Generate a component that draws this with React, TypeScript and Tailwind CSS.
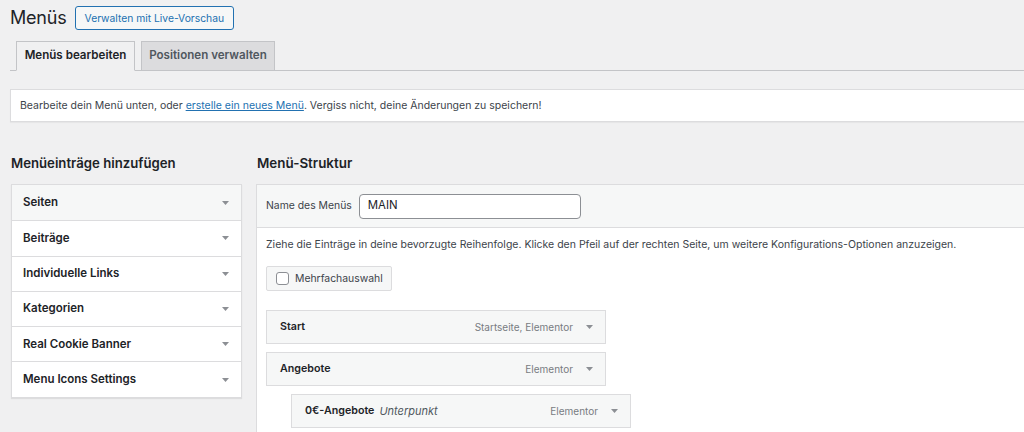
import React from "react";

const Arrow = ({ className = "" }: { className?: string }) => (
  <svg width="7" height="4" viewBox="0 0 7 4" className={`shrink-0 ${className}`}>
    <path d="M0 0 L7 0 L3.5 4 Z" fill="#8c8f94" />
  </svg>
);

const leftRows = [
  "Seiten",
  "Beiträge",
  "Individuelle Links",
  "Kategorien",
  "Real Cookie Banner",
  "Menu Icons Settings",
];

function MenuItem({
  title,
  sub,
  type,
  indent,
}: {
  title: string;
  sub?: string;
  type: string;
  indent?: boolean;
}) {
  return (
    <div className={indent ? "pl-[25px]" : ""}>
      <div className="flex h-[34px] w-[340px] items-center border border-[#dcdcde] bg-[#f6f7f7] pl-[13px] pr-[12px]">
        <span className="text-[10.7px] font-semibold text-[#1d2327]">{title}</span>
        {sub && <span className="ml-[5px] text-[11px] italic text-[#50575e]">{sub}</span>}
        <span className="ml-auto text-[10px] text-[#787c82]">{type}</span>
        <Arrow className="ml-[13px]" />
      </div>
    </div>
  );
}

export default function App() {
  return (
    <div
      className="h-[432px] w-[1024px] overflow-hidden bg-[#f0f0f1] text-[#3c434a]"
      style={{ fontFamily: "Inter, 'Noto Sans', sans-serif" }}
    >
      <div className="w-[1100px] pl-[10px]">
        {/* Header */}
        <div className="flex items-center pt-[6px]">
          <h1 className="text-[18px] font-normal leading-[24px] tracking-[-0.2px] text-[#1d2327]">Menüs</h1>
          <button className="ml-[8px] h-[24px] whitespace-nowrap rounded-[3px] border border-[#2271b1] bg-[#f6f7f7] px-[9px] text-[10.3px] leading-[22px] text-[#2271b1]">
            Verwalten mit Live-Vorschau
          </button>
        </div>

        {/* Tabs */}
        <div className="mt-[11px] flex gap-[6px] border-b border-[#c3c4c7] pl-[6px]">
          <div className="-mb-px flex h-[30px] w-[119px] items-center justify-center whitespace-nowrap border border-b-[#f0f0f1] border-[#c3c4c7] bg-[#f0f0f1] text-[11.6px] font-semibold text-[#1d2327]">
            Menüs bearbeiten
          </div>
          <div className="-mb-px flex h-[30px] w-[134px] items-center justify-center whitespace-nowrap border border-[#c3c4c7] bg-[#dcdcde] text-[11.6px] font-semibold text-[#50575e]">
            Positionen verwalten
          </div>
        </div>

        {/* Notice */}
        <div className="mt-[18px] flex h-[33px] items-center whitespace-nowrap border border-[#dcdcde] bg-white pl-[9px] text-[10.5px] text-[#3c434a] shadow-[0_1px_1px_rgba(0,0,0,0.04)]">
          Bearbeite dein Menü unten, oder&nbsp;
          <a className="text-[#2271b1] underline">erstelle ein neues Menü</a>. Vergiss nicht, deine Änderungen zu speichern!
        </div>

        {/* Columns */}
        <div className="mt-[30px] flex">
          {/* Left */}
          <div className="w-[232px] shrink-0">
            <h2 className="ml-[1px] text-[13.2px] font-semibold leading-[22px] text-[#1d2327]">Menüeinträge hinzufügen</h2>
            <div className="ml-[1px] mt-[10px] w-[231px] border border-[#dcdcde] bg-white shadow-[0_1px_1px_rgba(0,0,0,0.08)]">
              {leftRows.map((r, i) => (
                <div
                  key={r}
                  className={`flex h-[35.3px] items-center justify-between pl-[11px] pr-[12px] text-[11.5px] font-semibold text-[#1d2327] ${
                    i > 0 ? "border-t border-[#dcdcde]" : ""
                  } ${i === 0 ? "bg-[#f6f7f7]" : "bg-white"}`}
                >
                  <span>{r}</span>
                  <Arrow />
                </div>
              ))}
            </div>
          </div>

          {/* Right */}
          <div className="ml-[14px] flex-1">
            <h2 className="ml-[1px] text-[13.4px] font-semibold leading-[22px] text-[#1d2327]">Menü-Struktur</h2>
            <div className="mt-[10px] h-[260px] border border-[#dcdcde] bg-white">
              <div className="flex h-[43px] items-center border-b border-[#dcdcde] bg-[#f6f7f7] pl-[9px]">
                <span className="whitespace-nowrap text-[10.4px] text-[#3c434a]">Name des Menüs</span>
                <div className="ml-[7px] flex h-[25px] w-[222px] items-center rounded-[4px] border border-[#8c8f94] bg-white pl-[8px] text-[11.4px] text-[#1d2327]">
                  MAIN
                </div>
              </div>
              <div className="pl-[9px]">
                <p className="mt-[9px] whitespace-nowrap text-[10.5px] leading-[16px] text-[#3c434a]">
                  Ziehe die Einträge in deine bevorzugte Reihenfolge. Klicke den Pfeil auf der rechten Seite, um weitere Konfigurations-Optionen anzuzeigen.
                </p>
                <div className="mt-[13px] flex h-[25px] w-[126px] items-center rounded-[2px] border border-[#dcdcde] bg-[#f6f7f7] pl-[9px]">
                  <span className="h-[13px] w-[13px] shrink-0 rounded-[3px] border border-[#8c8f94] bg-white" />
                  <span className="ml-[6px] whitespace-nowrap text-[10.4px] text-[#3c434a]">Mehrfachauswahl</span>
                </div>
                <div className="mt-[19px] flex flex-col gap-[8px]">
                  <MenuItem title="Start" type="Startseite, Elementor" />
                  <MenuItem title="Angebote" type="Elementor" />
                  <MenuItem title="0€-Angebote" sub="Unterpunkt" type="Elementor" indent />
                </div>
              </div>
            </div>
          </div>
        </div>
      </div>
    </div>
  );
}
